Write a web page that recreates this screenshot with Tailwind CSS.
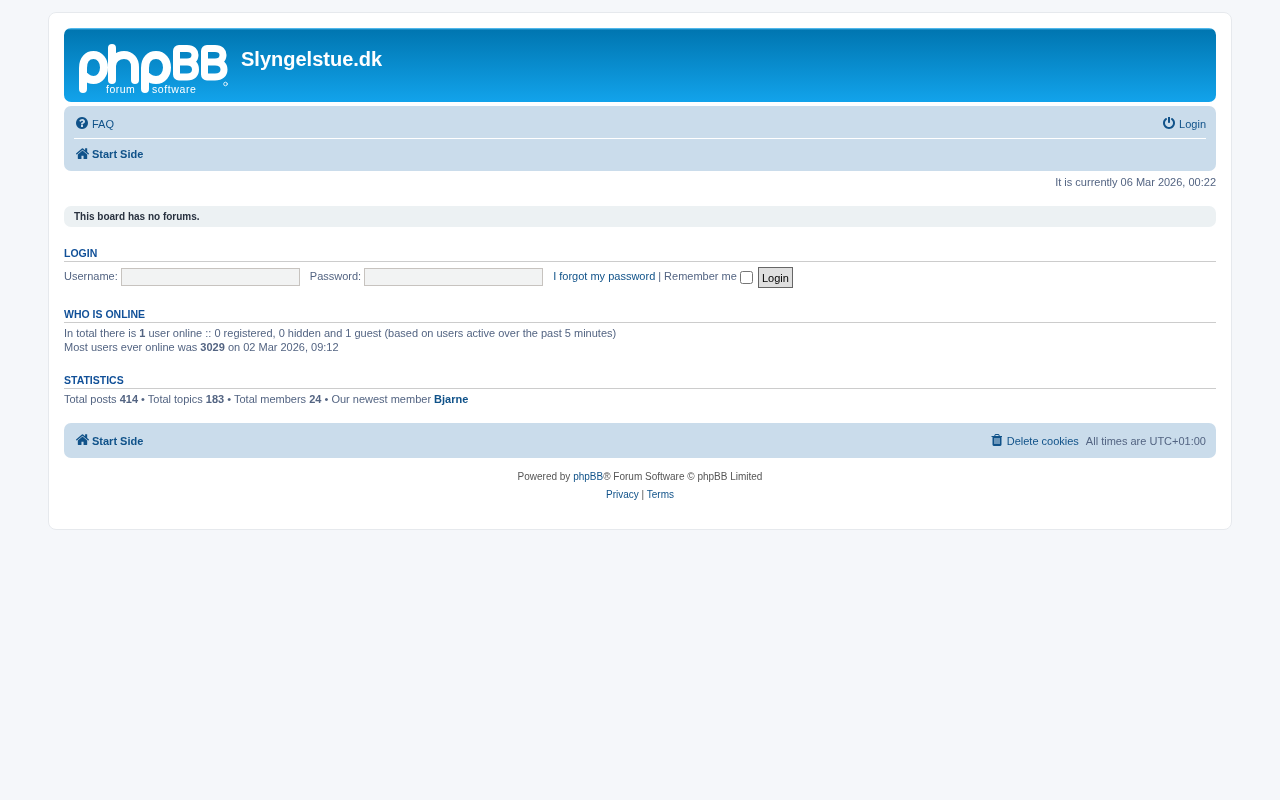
<!DOCTYPE html>
<html lang="en">
<head>
    <meta charset="UTF-8">
    <title>Slyngelstue.dk - Index page</title>
    <script src="https://cdn.jsdelivr.net/npm/@tailwindcss/browser@4"></script>
</head>
<body class="min-h-screen bg-[#f5f7fa] pt-3 font-['Liberation_Sans',Arial,sans-serif] text-[11px] leading-[14px] text-[#536482]">

    <div class="mx-auto w-[1184px] rounded-[8px] border border-[#e6e9ed] bg-white px-[15px] pt-[15px] pb-[25px] will-change-transform">

        <!-- header -->
        <header class="relative flex h-[74px] rounded-[7px] bg-[linear-gradient(to_bottom,#6aceff_0px,#0076b1_2px,#12a3eb_100%)]">
            <svg class="absolute left-[15px] top-[16px]" width="150" height="50" viewBox="0 0 150 50" fill="none" stroke="#fff" stroke-width="8" stroke-linecap="round">
                <!-- p -->
                <path d="M4 45V24C4 15 9 11 14.500 11C21 11 25 17 25 23.500C25 30 21 36 14.500 36C11 36 9 35 7 33"/>
                <!-- h -->
                <path d="M33 4V36M33 22C33 15 39 11 45 11C52 11 56 16 56 23V36"/>
                <!-- p -->
                <path d="M66 45V24C66 15 71 11 77 11C84 11 88 17 88 23.500C88 30 84 36 77 36C74 36 71 35 69 33"/>
                <!-- BB -->
                <path stroke-width="7" d="M97.500 18V7C97.500 5.500 98.500 4.500 100 4.500H108C114 4.500 116 7.500 116 11C116 15 113 18 108 18H100M108 18C114 18 116.500 21 116.500 25.500C116.500 30 114 33 108 33H100C98.500 33 97.500 32 97.500 30.500V18"/>
                <path stroke-width="7" d="M125.500 18V7C125.500 5.500 126.500 4.500 128 4.500H136C142 4.500 144 7.500 144 11C144 15 141 18 136 18H128M136 18C142 18 145 21 145 25.500C145 30 142 33 136 33H128C126.500 33 125.500 32 125.500 30.500V18"/>
                <circle cx="146.500" cy="40" r="1.800" stroke-width="0.800"/>
                <text x="27" y="48.500" fill="#fff" stroke="none" font-size="10.500" letter-spacing="0.500">forum</text>
                <text x="73" y="48.500" fill="#fff" stroke="none" font-size="10.500" letter-spacing="0.600">software</text>
            </svg>
            <h1 class="ml-[177px] mt-[19px] text-[20px] leading-[24px] font-bold text-white">Slyngelstue.dk</h1>
        </header>

        <!-- top nav -->
        <nav class="mt-1 h-[65px] rounded-[7px] bg-[#cadceb] px-[10px] text-[#105289]">
            <div class="flex h-[33px] items-center justify-between border-b border-white pt-[3px]">
                <a class="flex items-center gap-1 pl-[2px]">
                    <svg class="h-[12px] w-[12px] -translate-y-px" viewBox="128 128 1536 1536" fill="#105289"><path d="M1024 1376v-192q0-14-9-23t-23-9h-192q-14 0-23 9t-9 23v192q0 14 9 23t23 9h192q14 0 23-9t9-23zm256-672q0-88-55.500-163t-138.500-116-170-41q-243 0-371 213-15 24 8 42l132 100q7 6 19 6 16 0 25-12 53-68 86-92 34-24 86-24 48 0 85.500 26t37.500 59q0 38-20 61t-68 45q-63 28-115.500 86.500t-52.500 125.500v36q0 14 9 23t23 9h192q14 0 23-9t9-23q0-19 21.500-49.500t54.500-49.500q32-18 49-28.500t46-35 44.500-48 28-60.500 12.500-81zm384 192q0 209-103 385.500t-279.500 279.500-385.500 103-385.500-103-279.500-279.500-103-385.500 103-385.500 279.500-279.500 385.500-103 385.500 103 279.500 279.500 103 385.500z"/></svg>
                    FAQ
                </a>
                <a class="flex items-center gap-1">
                    <svg class="h-[12px] w-[12px] -translate-y-px" viewBox="128 128 1536 1536" fill="#105289"><path d="M1664 896q0 156-61 298t-164 245-245 164-298 61-298-61-245-164-164-245-61-298q0-182 80.500-343t226.500-270q43-32 95.500-25t83.500 50q32 42 24.500 94.500t-49.500 84.500q-98 74-151.500 181t-53.500 228q0 104 40.500 198.500t109.500 163.500 163.500 109.500 198.500 40.500 198.500-40.500 163.500-109.500 109.500-163.500 40.500-198.500q0-121-53.500-228t-151.500-181q-42-32-49.500-84.500t24.500-94.500q31-43 84-50t95 25q146 109 226.500 270t80.500 343zm-640-768v640q0 52-38 90t-90 38-90-38-38-90v-640q0-52 38-90t90-38 90 38 38 90z"/></svg>
                    Login
                </a>
            </div>
            <div class="flex h-[30px] items-center font-bold">
                <a class="flex items-center gap-[3px] pl-[2px]">
                    <svg class="h-[11px] w-[13px] -translate-y-px" viewBox="96 224 1600 1312" fill="#105289" preserveAspectRatio="none"><path d="M1472 992v480q0 26-19 45t-45 19h-384v-384h-256v384h-384q-26 0-45-19t-19-45v-480q0-1 .5-3t.5-3l575-474 575 474q1 2 1 6zm223-69l-62 74q-8 9-21 11h-3q-13 0-21-7l-692-577-692 577q-12 8-24 7-13-2-21-11l-62-74q-8-10-7-23.500t11-21.500l719-599q32-26 76-26t76 26l244 204v-195q0-14 9-23t23-9h192q14 0 23 9t9 23v408l219 182q10 8 11 21.500t-7 23.500z"/></svg>
                    Start Side
                </a>
            </div>
        </nav>

        <p class="mt-[4px] text-right">It is currently 06 Mar 2026, 00:22</p>

        <div class="mt-[17px] flex h-[21px] items-center rounded-[7px] bg-[#ecf1f3] px-[10px] text-[10px] font-bold text-[#28313f]">This board has no forums.</div>

        <!-- login -->
        <h3 class="mt-5 h-[15px] border-b border-[#cccccc] text-[10.500px] leading-[13px] font-bold text-[#115098]">LOGIN</h3>
        <form class="mt-[5px] flex h-[21px] items-start">
            <label class="mt-[2px]">Username:</label>
            <input type="text" class="ml-[3px] mt-[1px] h-[18px] w-[179px] border border-[#c7c3bf] bg-[#f2f3f3]">
            <label class="ml-[10px] mt-[2px]">Password:</label>
            <input type="password" class="ml-[3px] mt-[1px] h-[18px] w-[179px] border border-[#c7c3bf] bg-[#f2f3f3]">
            <a class="ml-[10px] mt-[2px] text-[#105289]">I forgot my password</a>
            <span class="ml-[3px] mt-[2px]">|</span>
            <span class="ml-[3px] mt-[2px]">Remember me</span>
            <input type="checkbox" class="ml-[3px] mt-[4px] h-[13px] w-[13px]">
            <button type="button" class="ml-[5px] h-[21px] w-[35px] border border-[#666666] bg-[#dfdfdf] text-[11px] text-black">Login</button>
        </form>

        <!-- online -->
        <h3 class="mt-5 h-[15px] border-b border-[#cccccc] text-[10.500px] leading-[13px] font-bold text-[#115098]">WHO IS ONLINE</h3>
        <p class="mt-[3px]">In total there is <strong>1</strong> user online :: 0 registered, 0 hidden and 1 guest (based on users active over the past 5 minutes)<br>Most users ever online was <strong>3029</strong> on 02 Mar 2026, 09:12</p>

        <!-- stats -->
        <h3 class="mt-5 h-[15px] border-b border-[#cccccc] text-[10.500px] leading-[13px] font-bold text-[#115098]">STATISTICS</h3>
        <p class="mt-[3px]">Total posts <strong>414</strong> • Total topics <strong>183</strong> • Total members <strong>24</strong> • Our newest member <strong class="text-[#105289]">Bjarne</strong></p>

        <!-- bottom nav -->
        <nav class="mt-[17px] flex h-[35px] items-center justify-between rounded-[7px] bg-[#cadceb] px-[10px]">
            <a class="flex items-center gap-[3px] pl-[2px] font-bold text-[#105289]">
                <svg class="h-[11px] w-[13px] -translate-y-px" viewBox="96 224 1600 1312" fill="#105289" preserveAspectRatio="none"><path d="M1472 992v480q0 26-19 45t-45 19h-384v-384h-256v384h-384q-26 0-45-19t-19-45v-480q0-1 .5-3t.5-3l575-474 575 474q1 2 1 6zm223-69l-62 74q-8 9-21 11h-3q-13 0-21-7l-692-577-692 577q-12 8-24 7-13-2-21-11l-62-74q-8-10-7-23.500t11-21.500l719-599q32-26 76-26t76 26l244 204v-195q0-14 9-23t23-9h192q14 0 23 9t9 23v408l219 182q10 8 11 21.500t-7 23.500z"/></svg>
                Start Side
            </a>
            <div class="flex items-center">
                <a class="flex items-center gap-[5px] text-[#105289]">
                    <svg class="h-[12px] w-[11px] -translate-y-px" viewBox="128 128 1408 1536" fill="#105289"><path d="M704 1376v-704q0-14-9-23t-23-9h-64q-14 0-23 9t-9 23v704q0 14 9 23t23 9h64q14 0 23-9t9-23zm256 0v-704q0-14-9-23t-23-9h-64q-14 0-23 9t-9 23v704q0 14 9 23t23 9h64q14 0 23-9t9-23zm256 0v-704q0-14-9-23t-23-9h-64q-14 0-23 9t-9 23v704q0 14 9 23t23 9h64q14 0 23-9t9-23zm-544-992h448l-48-117q-7-9-17-11h-317q-10 2-17 11zm928 32v64q0 14-9 23t-23 9h-96v948q0 83-47 143.500t-113 60.500h-832q-66 0-113-58.500t-47-141.500v-952h-96q-14 0-23-9t-9-23v-64q0-14 9-23t23-9h309l70-167q15-37 54-63t79-26h320q40 0 79 26t54 63l70 167h309q14 0 23 9t9 23z"/></svg>
                    Delete cookies
                </a>
                <span class="ml-[7px]">All times are UTC+01:00</span>
            </div>
        </nav>

        <!-- footer -->
        <footer class="mt-[10px] text-center text-[10px] leading-[18px] text-[#555555]">
            <p>Powered by <a class="text-[#105289]">phpBB</a>® Forum Software © phpBB Limited</p>
            <p><a class="text-[#105289]">Privacy</a> | <a class="text-[#105289]">Terms</a></p>
        </footer>
    </div>

</body>
</html>
